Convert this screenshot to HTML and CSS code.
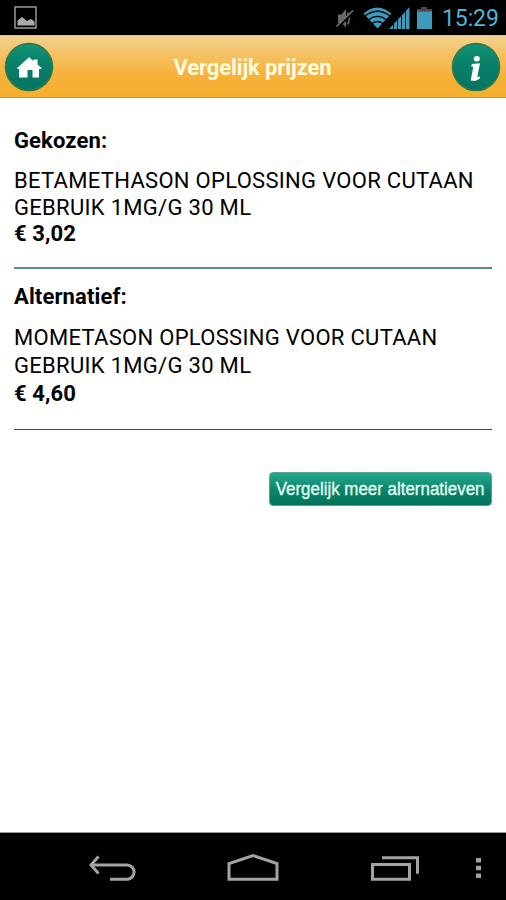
FILE: index.html
```html
<!DOCTYPE html>
<html lang="nl">
<head>
<meta charset="utf-8">
<title>Vergelijk prijzen</title>
<link rel="stylesheet" href="styles.css">
</head>
<body>
<div class="status">
  <svg width="24" height="24" viewBox="0 0 24 24"><path d="M1 1h21v21H1z" fill="none" stroke="#999" stroke-width="1.5"/><path d="M3.500 19.500v-5l4.500-3.500 5 4 4-2 3.500 2.500v4z" fill="#aaa"/></svg>
  <svg class="signals" width="104" height="24" viewBox="0 0 104 24">
    <path d="M4 8.500h3.500L12 3v18.500L7.500 17H4z" fill="#686868"/><path d="M13.500 6.500q3.500 6 0 12" fill="none" stroke="#686868" stroke-width="1.700"/><path d="M3 21.500 19.500 5.500" stroke="#000" stroke-width="3"/><path d="M2.500 20.500 19 4.500" stroke="#777" stroke-width="1.500"/>
    <path d="M29.500 7.500Q43-4.500 57.500 7.500L43.500 22.500z" fill="#3e9abb"/>
    <path d="M31 10q12.500-9.500 25 0M34.500 13.700q9-6.500 18 0M38 17.500q5.500-4 11 0" fill="none" stroke="#000" stroke-width="1.300"/>
    <path d="M55 23 75.500 1v22z" fill="#3e9abb"/><path d="M59.500 12v11M63.500 8v15M67.500 5v18M71.500 2v21" stroke="#001018" stroke-width="1"/>
    <path d="M87 1h6v2h5v3H83V3h4z" fill="#484848"/><path d="M83 5.500h15V23H83z" fill="#3e9abb"/>
  </svg>
  <span class="clock">15:29</span>
</div>
<header class="bar">
  <svg width="50" height="50" viewBox="0 0 50 50">
    <defs><linearGradient id="disc" x2="0" y2="1"><stop stop-color="#129377"/><stop offset=".45" stop-color="#087f68"/><stop offset="1" stop-color="#067461"/></linearGradient></defs>
    <circle cx="25" cy="25" r="23.500" fill="url(#disc)" stroke="#2d7d47" stroke-width="1.500"/>
    <path d="M13.200 26 25 15.300 29.500 19v-1.500h4v5L37.500 26v1H35v8.500h-6.500V28h-5v7.500H15V27h-1.800z" fill="#fff"/>
  </svg>
  <h1 class="title">Vergelijk prijzen</h1>
  <svg width="50" height="50" viewBox="0 0 50 50">
    <circle cx="25" cy="25" r="23.500" fill="url(#disc)" stroke="#2d7d47" stroke-width="1.500"/>
    <ellipse cx="25.800" cy="16.800" rx="3" ry="2.700" fill="#fff"/>
    <path d="m20.800 22 8.200-.7L26.300 35l2.700-.6-.3 2.300-4.500 2.200-4.500-.4 2.600-13.700-2-.4z" fill="#fff"/>
  </svg>
</header>
<main class="content">
  <section class="item chosen">
    <h2>Gekozen:</h2>
    <p>BETAMETHASON OPLOSSING VOOR CUTAAN<br>GEBRUIK 1MG/G 30 ML</p>
    <strong>€ 3,02</strong>
  </section>
  <section class="item alternative">
    <h2>Alternatief:</h2>
    <p>MOMETASON OPLOSSING VOOR CUTAAN<br>GEBRUIK 1MG/G 30 ML</p>
    <strong>€ 4,60</strong>
  </section>
  <button class="more"><span>Vergelijk meer alternatieven</span></button>
</main>
<nav class="nav">
  <svg width="506" height="67" viewBox="0 0 506 67" fill="none" stroke="#a3a3a3" stroke-width="3">
    <path d="M91 32h36a7.100 7.100 0 0 1 0 14.200h-17M98.500 23.500 91 32l7.500 8.500"/>
    <path d="M229 46.200V30.500L253 22.500l24 8v15.700z"/>
    <path d="M372.500 31.500h37v14.700h-37zM382 24.800h35.500v16"/>
    <path d="M478.500 25v4.500M478.500 32.700v4.500M478.500 40.500V45" stroke-width="5"/>
  </svg>
</nav>
</body>
</html>
```
FILE: styles.css
```css
* { box-sizing: border-box; }
body {
  margin: 0;
  width: 506px;
  height: 900px;
  display: flex;
  flex-direction: column;
  overflow: hidden;
  background: #fff;
  color: #000;
  font-family: Roboto, sans-serif;
}
svg { display: block; flex: none; }
.status {
  height: 35px;
  background: #000;
  display: flex;
  align-items: center;
  padding: 0 7px 0 14px;
}
.signals { margin-left: auto; }
.clock {
  width: 57px;
  margin-left: 4px;
  margin-top: 2px;
  color: #4db5dc;
  font-size: 23px;
  letter-spacing: -0.1px;
  line-height: 30px;
  white-space: nowrap;
}
.bar {
  height: 63px;
  padding: 0 5px 0 4px;
  display: flex;
  align-items: center;
  justify-content: space-between;
  background: linear-gradient(#f3d18f, #f5c164 30%, #f7b23b 62%, #f5ae2e);
  border-top: 1px solid #d2c5a5;
  border-bottom: 1px solid #cf9336;
}
.title {
  margin: 2px 0 0;
  color: #fffbe0;
  font-size: 22px;
  letter-spacing: -0.12px;
  line-height: 28px;
  font-weight: 700;
}
.content { flex: 1; padding: 0 14px; display: flex; flex-direction: column; }
.item { font-size: 22px; white-space: nowrap; }
.item h2 { margin: 0 0 13px; font-size: 22px; line-height: 27px; letter-spacing: 0.12px; }
.item p { margin: 0; line-height: 27px; letter-spacing: 0.3px; }
.item strong { display: block; line-height: 25px; letter-spacing: 0.12px; }
.chosen { height: 171px; padding-top: 29px; border-bottom: 2px solid #588b83; }
.alternative { height: 161px; padding-top: 14px; border-bottom: 1px solid #17594b; }
.alternative h2 { margin-bottom: 14px; }
.alternative p, .alternative strong { line-height: 28px; }
.more {
  width: 223px;
  height: 34px;
  margin: 42px 0 0;
  padding: 0;
  display: flex;
  justify-content: center;
  align-self: flex-end;
  border: 1px solid #56a493;
  border-radius: 4px;
  background: linear-gradient(#25a88c, #0d876c 50%, #007259);
  color: #e6fff5;
  font: 18px/33px "Liberation Sans", Arial, sans-serif;
  -webkit-text-stroke: 0.3px #e6fff5;
  white-space: nowrap;
}
.more span { flex: none; transform: scaleX(0.94); }
.nav { height: 68px; background: #000; border-top: 1px solid #999; }
```
